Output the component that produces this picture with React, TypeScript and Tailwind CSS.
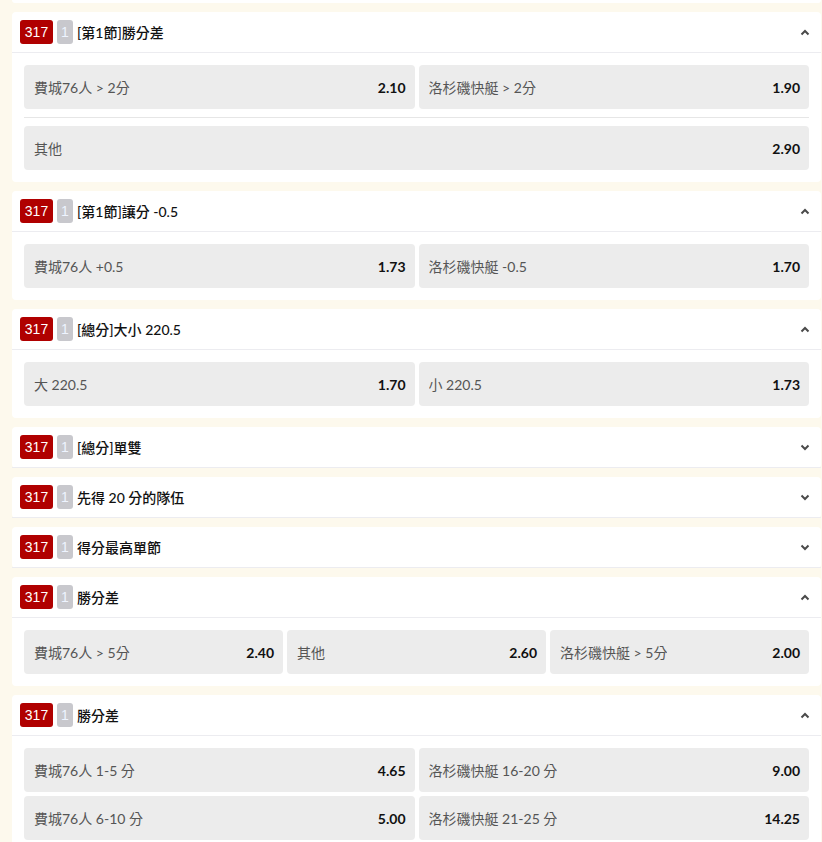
import React from "react";

type Pick = { label: string; odds: string };

interface Market {
  id: string;
  title: string;
  open: boolean;
  rows?: Pick[][];
}

const markets: Market[] = [
  {
    id: "m1",
    title: "[第1節]勝分差",
    open: true,
    rows: [
      [
        { label: "費城76人 > 2分", odds: "2.10" },
        { label: "洛杉磯快艇 > 2分", odds: "1.90" },
      ],
      [{ label: "其他", odds: "2.90" }],
    ],
  },
  {
    id: "m2",
    title: "[第1節]讓分 -0.5",
    open: true,
    rows: [
      [
        { label: "費城76人 +0.5", odds: "1.73" },
        { label: "洛杉磯快艇 -0.5", odds: "1.70" },
      ],
    ],
  },
  {
    id: "m3",
    title: "[總分]大小 220.5",
    open: true,
    rows: [
      [
        { label: "大 220.5", odds: "1.70" },
        { label: "小 220.5", odds: "1.73" },
      ],
    ],
  },
  { id: "m4", title: "[總分]單雙", open: false },
  { id: "m5", title: "先得 20 分的隊伍", open: false },
  { id: "m6", title: "得分最高單節", open: false },
  {
    id: "m7",
    title: "勝分差",
    open: true,
    rows: [
      [
        { label: "費城76人 > 5分", odds: "2.40" },
        { label: "其他", odds: "2.60" },
        { label: "洛杉磯快艇 > 5分", odds: "2.00" },
      ],
    ],
  },
  {
    id: "m8",
    title: "勝分差",
    open: true,
    rows: [
      [
        { label: "費城76人 1-5 分", odds: "4.65" },
        { label: "洛杉磯快艇 16-20 分", odds: "9.00" },
      ],
      [
        { label: "費城76人 6-10 分", odds: "5.00" },
        { label: "洛杉磯快艇 21-25 分", odds: "14.25" },
      ],
    ],
  },
];

const latin = "font-['Lato','Noto_Sans_CJK_TC',sans-serif]";
const badge = "font-['Liberation_Sans','Noto_Sans_CJK_TC',sans-serif]";

function Chevron({ up }: { up: boolean }) {
  return (
    <svg width="10" height="7" viewBox="0 0 10 7" className={up ? "" : "rotate-180"}>
      <path d="M1.5 5.5 L5 2 L8.5 5.5" fill="none" stroke="#4a4a4a" strokeWidth="2" />
    </svg>
  );
}

function PickBox({ pick }: { pick: Pick }) {
  return (
    <div className="flex-1 min-w-0 h-[44px] bg-[#ececec] rounded-[4px] flex items-center justify-between pl-[10px] pr-[9px]">
      <span className={`${latin} text-[14px] text-[#555555] truncate`}>{pick.label}</span>
      <span className={`${latin} text-[14px] font-bold text-[#111111]`}>{pick.odds}</span>
    </div>
  );
}

function Row({ picks }: { picks: Pick[] }) {
  return (
    <div className="flex gap-[4px]">
      {picks.map((p) => (
        <PickBox key={p.label} pick={p} />
      ))}
    </div>
  );
}

export default function App() {
  return (
    <div className="min-h-[842px] bg-[#fdf9ed] pl-[12px] pr-[1px]">
      {/* tail of the card above, scrolled off */}
      <div className="h-[3px] bg-white rounded-b-[4px] mb-[9px]" />

      {markets.map((m) => (
        <div key={m.id} className="bg-white rounded-[4px] mb-[9px]">
          {/* Header */}
          <div className="h-[41px] flex items-center pl-[8px] pr-[11px] border-b border-[#ececf0]">
            <span className={`${badge} h-[24px] w-[33px] rounded-[3px] bg-[#b00000] text-white text-[14px] leading-[24px] text-center`}>
              317
            </span>
            <span className={`${badge} ml-[4px] h-[24px] w-[16px] rounded-[3px] bg-[#c8c8cd] text-[#eef4ff] text-[14px] leading-[24px] text-center`}>
              1
            </span>
            <span className={`${latin} ml-[4px] text-[14px] font-medium text-[#111111]`}>{m.title}</span>
            <div className="ml-auto flex items-center">
              <Chevron up={m.open} />
            </div>
          </div>

          {/* Picks */}
          {m.open && m.rows && (
            <div className="p-[12px]">
              {m.id === "m1" ? (
                <>
                  <Row picks={m.rows[0]} />
                  <div className="my-[8px] h-px bg-[#e6e6e6]" />
                  <Row picks={m.rows[1]} />
                </>
              ) : (
                <div className="flex flex-col gap-[4px]">
                  {m.rows.map((row, i) => (
                    <Row key={i} picks={row} />
                  ))}
                </div>
              )}
            </div>
          )}
        </div>
      ))}
    </div>
  );
}
